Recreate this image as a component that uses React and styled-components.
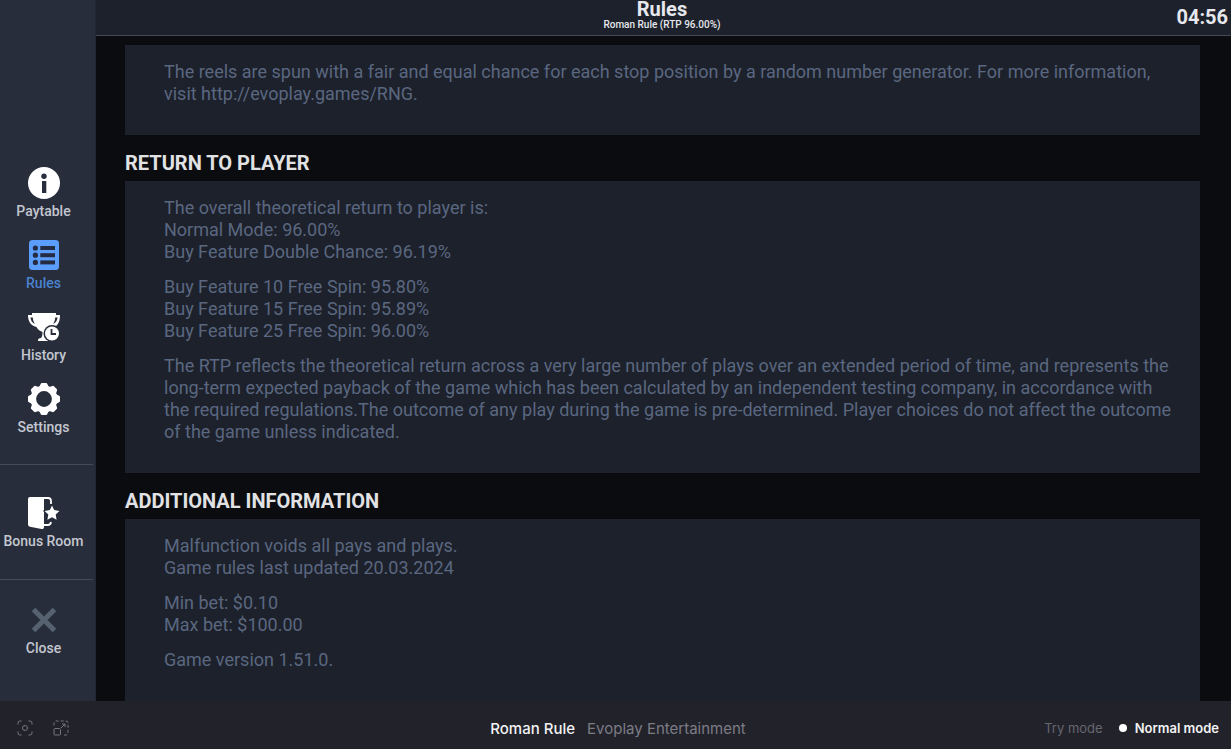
import { useState } from "react";
import styled, { createGlobalStyle } from "styled-components";

const PaytableIcon = () => (
	<svg viewBox="0 0 32 32" aria-hidden="true">
		<circle cx="16" cy="16" r="16" fill="#fff" />
		<circle cx="16" cy="9.2" r="2.7" fill="#282d3b" />
		<rect x="14" y="14" width="4.3" height="12" fill="#282d3b" />
	</svg>
);

const RulesIcon = () => (
	<svg viewBox="0 0 32 32" aria-hidden="true">
		<rect x="1" y="1" width="30" height="30" rx="3.5" fill="#5b9dfa" />
		<g fill="#252c42">
			{[9, 16.2, 23.4].map((y) => (
				<g key={y}>
					<circle cx="7.4" cy={y} r="2.6" />
					<rect x="12.3" y={y - 2} width="14.7" height="4" />
				</g>
			))}
		</g>
	</svg>
);

const HistoryIcon = () => (
	<svg viewBox="0 0 32 32" aria-hidden="true">
		<path
			fill="#fff"
			d="M4 2h24v2h4c0 5-1 9-5 12h-5c-1 2-2 3-4 4v6l4 2v2H10v-1c0-1 1-2 3-2 1-1 1.5-3 1.5-6-3-1-5-3-6-5C2 14.5 0 9.5 0 4h4zM2.400 6.500c.5 3.500 2 5.500 4.600 6.500C5.500 11 5 9 4.800 6.500zM29.600 6.500h-2.400c-.2 2.500-.7 4.500-2.200 6.500 2.600-1 4.100-3 4.600-6.500z"
			fillRule="evenodd"
		/>
		<circle cx="24" cy="22.5" r="8.5" fill="#282d3b" />
		<circle cx="24" cy="22.5" r="7" fill="#fff" />
		<path d="M23.5 18v5H28" fill="none" stroke="#282d3b" strokeWidth="1.8" />
	</svg>
);

const SettingsIcon = () => (
	<svg viewBox="0 0 32 32" aria-hidden="true">
		<circle cx="16" cy="16" r="10.7" fill="none" stroke="#fff" strokeWidth="5.6" />
		{[0, 45, 90, 135, 180, 225, 270, 315].map((angle) => (
			<path
				key={angle}
				d="M11 4.5 12.8.8Q13 0 14 0h4q1 0 1.2.8L21 4.5z"
				fill="#fff"
				transform={`rotate(${angle} 16 16)`}
			/>
		))}
	</svg>
);

const BonusIcon = () => (
	<svg viewBox="0 0 32 32" aria-hidden="true">
		<path d="M2 0h12q2 0 2 2v28q0 2.500-2.500 2L2 29.800Q0 29.300 0 27.500V2Q0 0 2 0z" fill="#fff" />
		<path
			d="M14 1h6q3 0 3 3v3M16 28h4q2.500 0 3-3"
			fill="none"
			stroke="#fff"
			strokeWidth="1.8"
		/>
		<path
			d="M24 8.500l2.200 4.600 5.200.8-3.700 3.600.9 5.200-4.600-2.400-4.600 2.400.9-5.200-3.700-3.600 5.200-.8z"
			fill="#fff"
			stroke="#282d3b"
			strokeWidth="2.4"
			paintOrder="stroke"
			strokeLinejoin="round"
		/>
	</svg>
);

const CloseIcon = () => (
	<svg viewBox="0 0 32 32" aria-hidden="true">
		<path d="M5.500 5.500l21 21M26.500 5.500l-21 21" stroke="#56626f" strokeWidth="5" />
	</svg>
);

const FocusIcon = () => (
	<svg viewBox="0 0 16 16" fill="none" stroke="#74747d" aria-hidden="true">
		<path d="M1 4.500V3q0-2 2-2h1.500M11.500 1H13q2 0 2 2v1.500M15 11.500V13q0 2-2 2h-1.500M4.500 15H3q-2 0-2-2v-1.500" />
		<circle cx="8" cy="8" r="2.5" />
	</svg>
);

const ExpandIcon = () => (
	<svg viewBox="0 0 16 16" fill="none" stroke="#74747d" aria-hidden="true">
		<path d="M1 5.500V3q0-2 2-2h10q2 0 2 2v10q0 2-2 2H9.500" strokeDasharray="3 2" />
		<rect x="1" y="8.5" width="6.5" height="6.5" rx="1" />
		<path d="M8 8l4-4M9 4h3v3" />
	</svg>
);

const MENU = [
	{ id: "paytable", label: "Paytable", Icon: PaytableIcon },
	{ id: "rules", label: "Rules", Icon: RulesIcon },
	{ id: "history", label: "History", Icon: HistoryIcon },
	{ id: "settings", label: "Settings", Icon: SettingsIcon },
];

const App = () => {
	const [section, setSection] = useState("rules");
	const [mode, setMode] = useState("normal");

	return (
		<Page>
			<GlobalStyle />
			<Game>
				<Sidebar>
					<Menu>
						{MENU.map(({ id, label, Icon }) => (
							<MenuButton key={id} $active={section === id} onClick={() => setSection(id)}>
								<Icon />
								{label}
							</MenuButton>
						))}
					</Menu>
					<MenuGroup $top={32} $bottom={30}>
						<MenuButton>
							<BonusIcon />
							Bonus Room
						</MenuButton>
					</MenuGroup>
					<MenuGroup $top={24} $bottom={45}>
						<MenuButton>
							<CloseIcon />
							Close
						</MenuButton>
					</MenuGroup>
				</Sidebar>

				<Content>
					<Header>
						<Title>Rules</Title>
						<Clock>04:56</Clock>
						<Subtitle>Roman Rule (RTP 96.00%)</Subtitle>
					</Header>
					<RulesBody>
						<Panel>
							<p>
								The reels are spun with a fair and equal chance for each stop position by a random
								number generator. For more information,
								<br />
								visit http://evoplay.games/RNG.
							</p>
						</Panel>

						<Heading>RETURN TO PLAYER</Heading>
						<Panel>
							<p>
								The overall theoretical return to player is:
								<br />
								Normal Mode: 96.00%
								<br />
								Buy Feature Double Chance: 96.19%
							</p>
							<p>
								Buy Feature 10 Free Spin: 95.80%
								<br />
								Buy Feature 15 Free Spin: 95.89%
								<br />
								Buy Feature 25 Free Spin: 96.00%
							</p>
							<p>
								The RTP reflects the theoretical return across a very large number of plays over an
								extended period of time, and represents the
								<br />
								long-term expected payback of the game which has been calculated by an independent
								testing company, in accordance with
								<br />
								the required regulations.The outcome of any play during the game is pre-determined.
								Player choices do not affect the outcome
								<br />
								of the game unless indicated.
							</p>
						</Panel>

						<Heading>ADDITIONAL INFORMATION</Heading>
						<Panel>
							<p>
								Malfunction voids all pays and plays.
								<br />
								Game rules last updated 20.03.2024
							</p>
							<p>
								Min bet: $0.10
								<br />
								Max bet: $100.00
							</p>
							<p>Game version 1.51.0.</p>
						</Panel>
					</RulesBody>
				</Content>
			</Game>

			<Footer>
				<Tools>
					<ToolButton aria-label="Focus">
						<FocusIcon />
					</ToolButton>
					<ToolButton aria-label="Full screen">
						<ExpandIcon />
					</ToolButton>
				</Tools>
				<GameName>
					<strong>Roman Rule</strong>
					<span>Evoplay Entertainment</span>
				</GameName>
				<Modes>
					<ModeButton $active={mode === "try"} onClick={() => setMode("try")}>
						Try mode
					</ModeButton>
					<ModeButton $active={mode === "normal"} onClick={() => setMode("normal")}>
						Normal mode
					</ModeButton>
				</Modes>
			</Footer>
		</Page>
	);
};

export default App;

const GlobalStyle = createGlobalStyle`
	* {
		box-sizing: border-box;
	}

	body {
		margin: 0;
		background: #0a0c10;
		font-family: Roboto, "Liberation Sans", sans-serif;
	}

	h1, h2, p {
		margin: 0;
	}

	button {
		padding: 0;
		border: 0;
		background: none;
		font: inherit;
		cursor: pointer;
	}
`;

const Page = styled.div`
	display: flex;
	flex-direction: column;
	height: 100vh;
`;

const Game = styled.div`
	display: flex;
	flex: 1;
	min-height: 0;
`;

const Sidebar = styled.nav`
	display: flex;
	flex-direction: column;
	justify-content: flex-end;
	flex: 0 0 96px;
	padding-right: 2px;
	background: #282d3b;
	border-right: 1px solid #222735;
`;

const Menu = styled.div`
	display: flex;
	flex-direction: column;
	gap: 20px;
	padding-bottom: 29px;
`;

const MenuGroup = styled.div`
	display: flex;
	flex-direction: column;
	padding: ${({ $top, $bottom }) => `${$top}px 0 ${$bottom}px`};
	border-top: 1px solid #434b5c;
`;

const MenuButton = styled.button`
	display: flex;
	flex-direction: column;
	align-items: center;
	gap: 4px;
	padding-right: 6px;
	color: ${({ $active }) => ($active ? "#4a83d0" : "#c3c7d0")};
	font-size: 14px;
	font-weight: 500;
	line-height: 16px;
	white-space: nowrap;

	svg {
		width: 32px;
		height: 32px;
	}
`;

const Content = styled.main`
	display: flex;
	flex-direction: column;
	flex: 1;
	min-width: 0;
`;

const Header = styled.header`
	display: grid;
	grid-template-columns: 1fr auto 1fr;
	grid-template-rows: 18px 17px;
	justify-items: center;
	padding-right: 3px;
	color: #e6e8ed;
	background: #1d212b;
	border-bottom: 1px solid #434956;
`;

const Title = styled.h1`
	grid-column: 2;
	font-size: 20px;
	font-weight: 700;
	line-height: 18px;
`;

const Subtitle = styled.div`
	grid-column: 2;
	grid-row: 2;
	font-size: 10px;
	font-weight: 500;
	line-height: 13px;
`;

const Clock = styled.time`
	grid-column: 3;
	grid-row: 1 / 3;
	justify-self: end;
	font-size: 20px;
	font-weight: 700;
	line-height: 34px;
`;

const RulesBody = styled.div`
	flex: 1;
	min-height: 0;
	overflow: hidden;
	padding: 9px 31px 0 29px;
`;

const Heading = styled.h2`
	padding-top: 10px;
	color: #e2e2e4;
	font-size: 20px;
	font-weight: 700;
	line-height: 36px;
`;

const Panel = styled.section`
	padding: 16px 20px 30px 39px;
	background: #1d212b;
	color: #5a6780;
	font-size: 18px;
	line-height: 22px;

	p + p {
		margin-top: 13px;
	}
`;

const Footer = styled.footer`
	display: grid;
	grid-template-columns: 1fr auto 1fr;
	align-items: center;
	height: 48px;
	padding: 6px 12px 0 17px;
	background: #22222b;
	color: #7c7c85;
	font-family: Inter, "Liberation Sans", sans-serif;
`;

const Tools = styled.div`
	display: flex;
	gap: 20px;
`;

const ToolButton = styled.button`
	display: flex;

	svg {
		width: 16px;
		height: 16px;
	}
`;

const GameName = styled.div`
	display: flex;
	gap: 12px;
	font-size: 15px;

	strong {
		color: #f2f2f3;
		font-weight: 500;
	}
`;

const Modes = styled.div`
	display: flex;
	justify-content: flex-end;
	gap: 16px;
`;

const ModeButton = styled.button`
	display: flex;
	align-items: center;
	gap: 8px;
	color: ${({ $active }) => ($active ? "#f2f2f3" : "#66666f")};
	font-size: 13px;
	font-weight: ${({ $active }) => ($active ? 600 : 400)};

	&::before {
		display: ${({ $active }) => ($active ? "block" : "none")};
		width: 8px;
		height: 8px;
		border-radius: 50%;
		background: #fff;
		content: "";
	}
`;
